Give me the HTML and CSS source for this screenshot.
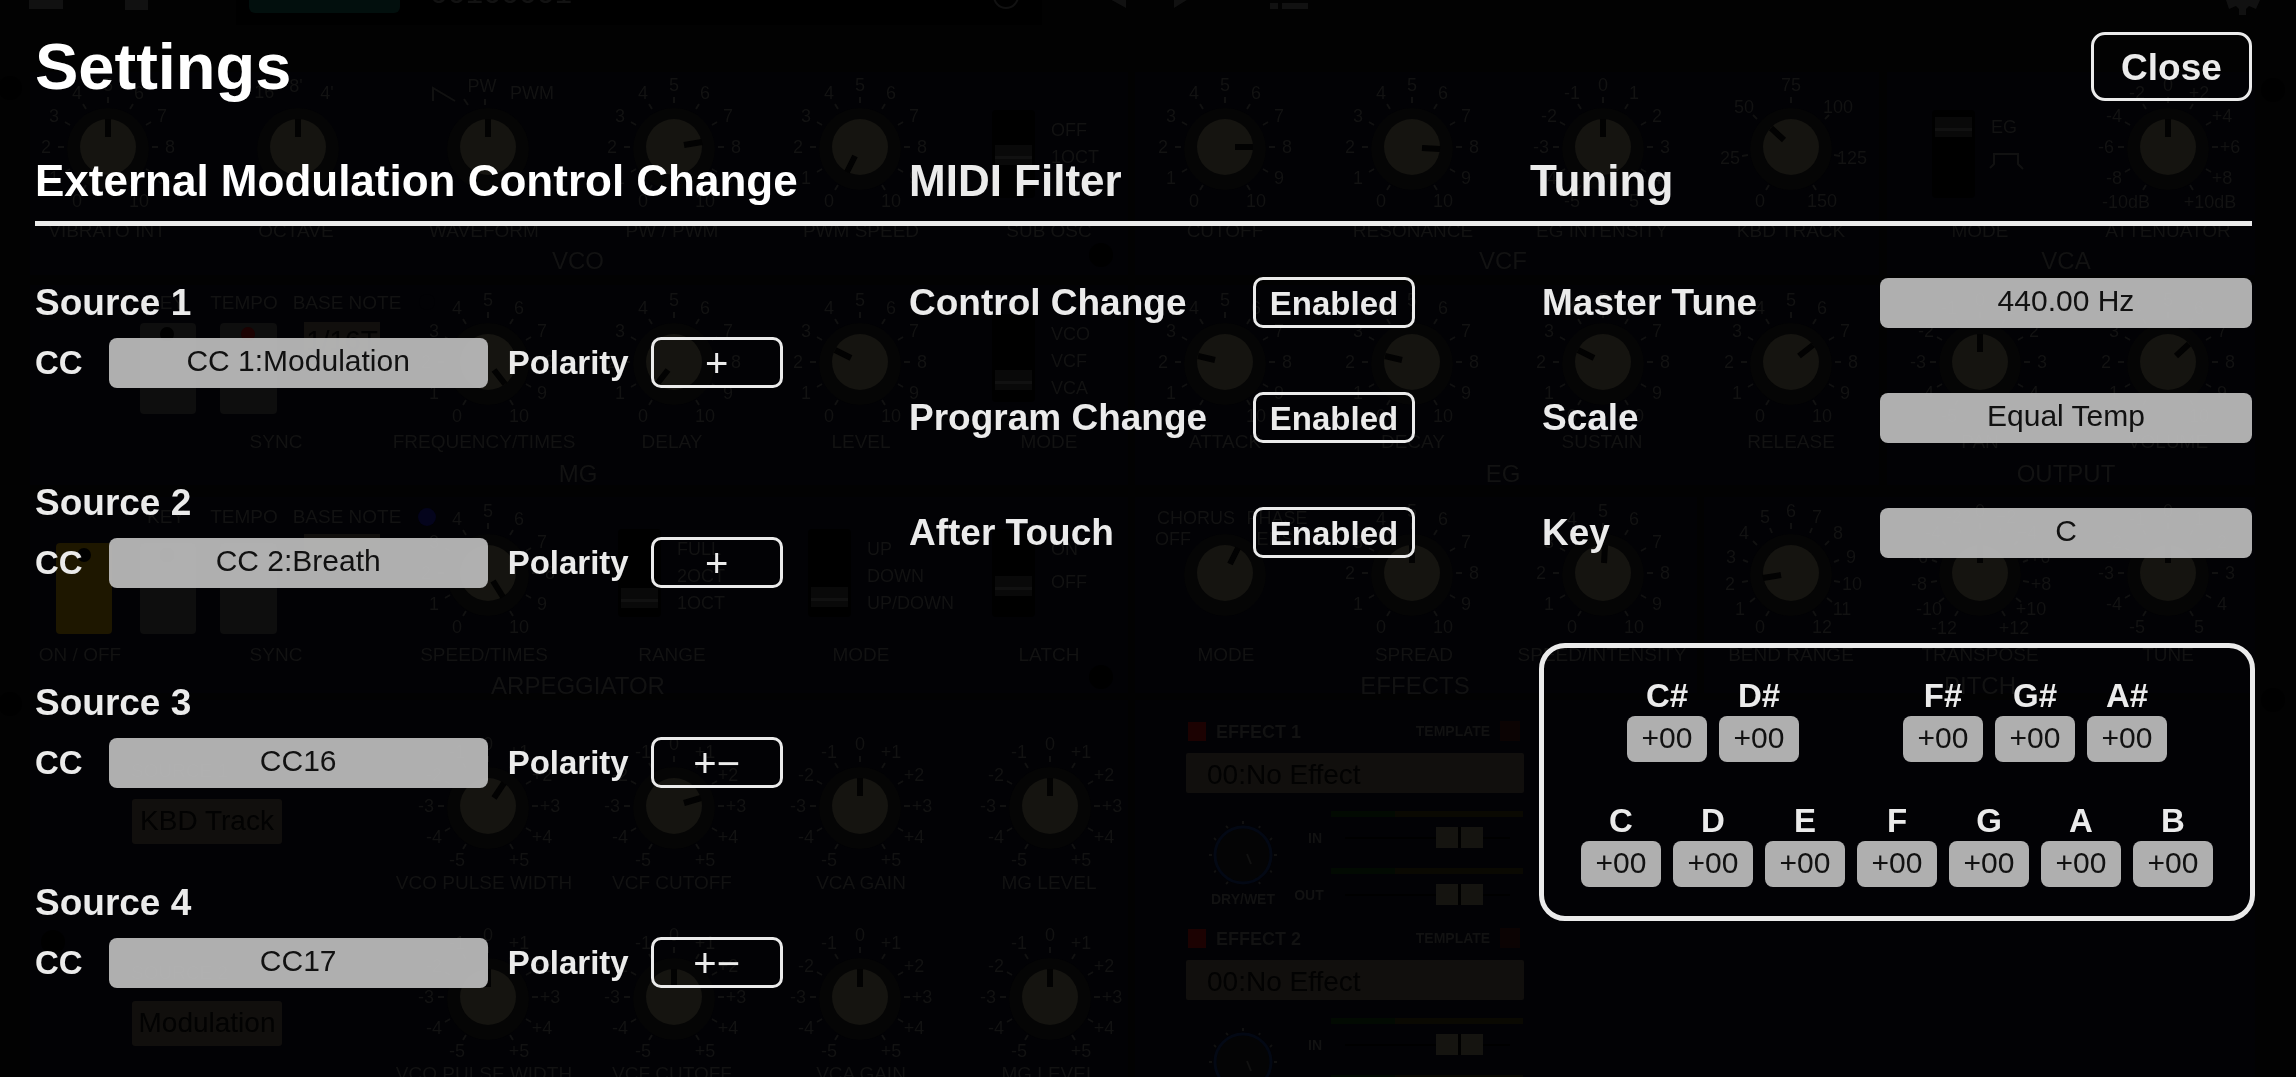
FILE: index.html
```html
<!DOCTYPE html>
<html lang="en">
<head>
  <meta charset="UTF-8" />
  <meta name="viewport" content="width=device-width, initial-scale=1" />
  <title>Settings</title>
  <link rel="stylesheet" href="styles.css">
</head>
<body>

  <!-- Synth panel behind the overlay, filled in by panel.js -->
  <svg id="panel" class="panel" viewBox="0 0 2296 1077" preserveAspectRatio="xMinYMin slice" aria-hidden="true"></svg>

  <div class="settings">
    <header class="settings-header">
      <h1>Settings</h1>
      <button class="btn btn-close" type="button">Close</button>
    </header>

    <div class="columns headings">
      <h2>External Modulation Control Change</h2>
      <h2>MIDI Filter</h2>
      <h2>Tuning</h2>
    </div>

    <div class="columns">
      <!-- External modulation -->
      <section class="sources">
        <div class="source">
          <h3>Source 1</h3>
          <div class="source-row">
            <label for="cc1">CC</label>
            <select id="cc1" class="field"><option>CC 1:Modulation</option></select>
            <label for="pol1">Polarity</label>
            <button id="pol1" class="btn btn-polarity" type="button">+</button>
          </div>
        </div>
        <div class="source">
          <h3>Source 2</h3>
          <div class="source-row">
            <label for="cc2">CC</label>
            <select id="cc2" class="field"><option>CC 2:Breath</option></select>
            <label for="pol2">Polarity</label>
            <button id="pol2" class="btn btn-polarity" type="button">+</button>
          </div>
        </div>
        <div class="source">
          <h3>Source 3</h3>
          <div class="source-row">
            <label for="cc3">CC</label>
            <select id="cc3" class="field"><option>CC16</option></select>
            <label for="pol3">Polarity</label>
            <button id="pol3" class="btn btn-polarity" type="button">+−</button>
          </div>
        </div>
        <div class="source">
          <h3>Source 4</h3>
          <div class="source-row">
            <label for="cc4">CC</label>
            <select id="cc4" class="field"><option>CC17</option></select>
            <label for="pol4">Polarity</label>
            <button id="pol4" class="btn btn-polarity" type="button">+−</button>
          </div>
        </div>
      </section>

      <!-- MIDI filter -->
      <section class="filters">
        <div class="row">
          <label for="filterCc">Control Change</label>
          <button id="filterCc" class="btn btn-toggle" type="button">Enabled</button>
        </div>
        <div class="row">
          <label for="filterPc">Program Change</label>
          <button id="filterPc" class="btn btn-toggle" type="button">Enabled</button>
        </div>
        <div class="row">
          <label for="filterAt">After Touch</label>
          <button id="filterAt" class="btn btn-toggle" type="button">Enabled</button>
        </div>
      </section>

      <!-- Tuning -->
      <section class="tuning">
        <div class="row">
          <label for="masterTune">Master Tune</label>
          <input id="masterTune" class="field" type="text" value="440.00 Hz">
        </div>
        <div class="row">
          <label for="scale">Scale</label>
          <select id="scale" class="field"><option>Equal Temp</option></select>
        </div>
        <div class="row">
          <label for="key">Key</label>
          <select id="key" class="field"><option>C</option></select>
        </div>

        <div class="notes">
          <label class="note note-first">C#<input class="field" type="text" value="+00"></label>
          <label class="note">D#<input class="field" type="text" value="+00"></label>
          <label class="note note-skip">F#<input class="field" type="text" value="+00"></label>
          <label class="note">G#<input class="field" type="text" value="+00"></label>
          <label class="note">A#<input class="field" type="text" value="+00"></label>
          <label class="note note-white">C<input class="field" type="text" value="+00"></label>
          <label class="note">D<input class="field" type="text" value="+00"></label>
          <label class="note">E<input class="field" type="text" value="+00"></label>
          <label class="note">F<input class="field" type="text" value="+00"></label>
          <label class="note">G<input class="field" type="text" value="+00"></label>
          <label class="note">A<input class="field" type="text" value="+00"></label>
          <label class="note">B<input class="field" type="text" value="+00"></label>
        </div>
      </section>
    </div>
  </div>

  <script src="panel.js"></script>
</body>
</html>
```
FILE: styles.css
```css
* {
  margin: 0;
  padding: 0;
  box-sizing: border-box;
}

body {
  font-family: "Liberation Sans", Arial, sans-serif;
  background-color: #020202;
  color: #ebebeb;
  min-height: 100vh;
}

/* Dimmed synth panel */
.panel {
  position: fixed;
  top: 0;
  left: 0;
  width: 100%;
  height: 100%;
  z-index: -1;
}

.panel text {
  fill: #121212;
  font-size: 19px;
  text-anchor: middle;
}

.panel .scale-label {
  font-size: 18px;
}

.panel .section {
  font-size: 24px;
}

.panel .left {
  text-anchor: start;
}

.panel .bold {
  font-weight: bold;
}

.panel .small {
  font-size: 14px;
  font-weight: bold;
}

.panel .display {
  font-size: 28px;
  fill: #020202;
}

.panel .patch-name {
  font-size: 32px;
}

.panel .bay {
  fill: #020205;
}

.panel .ring {
  fill: #050505;
}

.panel .cap {
  fill: #151410;
}

.panel .lcd {
  fill: #110f0d;
}

.panel .slot {
  fill: #000;
}

.panel .grip {
  fill: #090909;
}

.panel .key {
  fill: #0e0e0e;
}

.panel .key-on {
  fill: #1e1700;
}

.panel .tick {
  stroke: #111;
  stroke-width: 2;
  fill: none;
}

.panel .pointer {
  stroke: #020202;
  stroke-width: 6;
}

.panel .led-red {
  fill: #1c0202;
}

.panel .led-off {
  fill: #0b0303;
}

.panel .led-blue {
  fill: #04041c;
}

.panel .preset {
  fill: #020f0d;
}

.panel .icon {
  fill: #111;
}

.panel .blue-ring {
  fill: #040405;
  stroke: #030814;
  stroke-width: 3;
}

.panel .meter-green {
  fill: #020a02;
}

.panel .meter-yellow {
  fill: #0a0902;
}

/* Settings overlay */
.settings {
  padding: 32px 44px 40px 35px;
}

.settings-header {
  display: flex;
  justify-content: space-between;
  align-items: center;
  height: 69px;
}

h1 {
  font-size: 65px;
  line-height: 72px;
  color: #fff;
}

h2 {
  font-size: 44px;
  line-height: 48px;
}

.headings h2:first-child {
  color: #fff;
}

h3 {
  font-size: 37px;
  line-height: 42px;
}

.columns {
  display: grid;
  grid-template-columns: 874fr 621fr 722fr;
}

.headings {
  padding: 56px 0 16px;
  border-bottom: 5px solid #ebebeb;
  margin-bottom: 51px;
}

/* Buttons and fields */
.btn {
  background: transparent;
  border: 3px solid #ebebeb;
  border-radius: 10px;
  color: #ebebeb;
  font-family: inherit;
  font-size: 33px;
  font-weight: bold;
  cursor: pointer;
}

.btn-close {
  width: 161px;
  height: 69px;
  padding-top: 3px;
  font-size: 37px;
  border-radius: 14px;
}

.btn-toggle {
  width: 162px;
  height: 51px;
  padding-top: 2px;
}

.btn-polarity {
  width: 132px;
  height: 51px;
  margin-left: 22px;
  font-size: 40px;
  font-weight: normal;
  line-height: 40px;
}

.field {
  appearance: none;
  height: 50px;
  border: none;
  border-radius: 8px;
  background-color: rgba(188, 188, 188, 0.93);
  color: #111;
  font-family: inherit;
  font-size: 30px;
  text-align: center;
  text-align-last: center;
  padding-bottom: 4px;
}

/* External modulation sources */
.sources {
  display: flex;
  flex-direction: column;
  gap: 94px;
  padding-top: 5px;
}

.source-row {
  display: flex;
  align-items: center;
  margin-top: 13px;
  font-size: 33px;
  font-weight: bold;
}

.source-row .field {
  width: 379px;
  margin: 0 20px 0 26px;
}

/* Label and control on one line */
.row {
  display: flex;
  align-items: center;
  height: 51px;
  margin-bottom: 64px;
  font-size: 37px;
  font-weight: bold;
}

.filters .row label {
  width: 344px;
}

.tuning {
  padding-left: 9px;
  margin-right: -3px;
}

.tuning .row {
  justify-content: space-between;
  padding: 0 3px;
}

.tuning .row .field {
  width: 372px;
}

/* Note offsets, laid out like a keyboard */
.notes {
  display: grid;
  grid-template-columns: repeat(14, 1fr);
  gap: 41px 12px;
  margin-top: 85px;
  padding: 30px 37px 29px;
  border: 5px solid #ebebeb;
  border-radius: 26px;
}

.note {
  grid-column: span 2;
  font-size: 33px;
  font-weight: bold;
  line-height: 36px;
  text-align: center;
}

.note-first {
  grid-column: 2 / span 2;
}

.note-skip {
  grid-column: 8 / span 2;
}

.note-white {
  grid-column: 1 / span 2;
}

.note .field {
  display: block;
  width: 100%;
  height: 46px;
  margin-top: 2px;
  padding-bottom: 2px;
}
```
FILE: panel.js
```js
const panel = document.getElementById('panel');
let out = '';

function text(x, y, label, cls) {
  out += `<text x="${x}" y="${y}" class="${cls || ''}">${label}</text>`;
}

function rect(x, y, w, h, cls, r) {
  out += `<rect x="${x}" y="${y}" width="${w}" height="${h}" rx="${r || 0}" class="${cls}"/>`;
}

// angle is clockwise from 12 o'clock
function point(x, y, r, angle) {
  const a = angle * Math.PI / 180;
  return [Math.round(x + r * Math.sin(a)), Math.round(y - r * Math.cos(a))];
}

function line(from, to, cls) {
  out += `<line x1="${from[0]}" y1="${from[1]}" x2="${to[0]}" y2="${to[1]}" class="${cls}"/>`;
}

// Knob with its scale spread from -150 to 150 degrees
function knob(x, y, angle, labels) {
  const step = labels.length > 1 ? 300 / (labels.length - 1) : 0;
  labels.forEach((label, i) => {
    const a = -150 + step * i;
    line(point(x, y, 44, a), point(x, y, 50, a), 'tick');
    const p = point(x, y, 62, a);
    text(p[0], p[1] + 6, label, 'scale-label');
  });
  out += `<circle cx="${x}" cy="${y + 2}" r="41" class="ring"/>`;
  out += `<circle cx="${x}" cy="${y}" r="28" class="cap"/>`;
  line(point(x, y, 10, angle), point(x, y, 28, angle), 'pointer');
}

// Vertical switch with its option names on the right
function fader(x, y, grip, labels) {
  rect(x, y, 43, 88, 'slot', 4);
  rect(x + 3, grip, 37, 20, 'grip');
  rect(x + 3, grip + 11, 37, 3, 'icon');
  labels.forEach((label, i) => text(x + 59, y + 26 + i * 27, label, 'left scale-label'));
}

function names(y, list) {
  list.forEach(([x, label]) => text(x, y, label));
}

const ten = ['0', '1', '2', '3', '4', '5', '6', '7', '8', '9', '10'];
const five = ['-5', '-4', '-3', '-2', '-1', '0', '1', '2', '3', '4', '5'];
const plus = ['-5', '-4', '-3', '-2', '-1', '0', '+1', '+2', '+3', '+4', '+5'];

// Toolbar
rect(29, 0, 34, 9, 'icon');
rect(125, 0, 23, 10, 'icon');
rect(236, 0, 806, 25, 'slot');
rect(249, -20, 151, 33, 'preset', 6);
text(430, 3, '00100001', 'left patch-name');
out += '<circle cx="1006" cy="-4" r="12" class="tick"/>';
out += '<path d="M1108 -2 L1126 8 V-12Z M1190 -2 L1174 8 V-12Z" class="icon"/>';
rect(1270, 3, 8, 6, 'icon');
rect(1282, 3, 26, 6, 'icon');
out += '<path d="M2226 0 h34 l-4 9 -7 -3 -3 3 v6 h-7 v-6 l-3 -3 -7 3z" class="icon"/>';

// Panel bays
[[72, 203], [285, 200], [497, 196], [700, 377]].forEach(([y, h]) => {
  rect(30, y, 1098, h, 'bay');
});
[[72, 203], [285, 200]].forEach(([y, h]) => {
  rect(1135, y, 744, h, 'bay');
  rect(1887, y, 368, h, 'bay');
});
rect(1135, 497, 562, 196, 'bay');
rect(1704, 497, 551, 196, 'bay');
rect(1135, 700, 1120, 377, 'bay');

// Screws
[[10, 88], [1101, 255], [1101, 677], [2273, 90], [10, 704], [2273, 700], [53, 942]].forEach(([x, y]) => {
  out += `<circle cx="${x}" cy="${y}" r="12" class="slot"/>`;
});

// VCO, VCF, VCA
knob(108, 147, 0, ten);
knob(298, 147, 0, []);
text(266, 98, "16'", 'scale-label');
text(296, 92, "8'", 'scale-label');
text(327, 99, "4'", 'scale-label');
knob(488, 147, 0, []);
out += '<path d="M433 101 V88 L455 101" class="tick"/>';
line([468, 105], [464, 99], 'tick');
line([485, 105], [485, 99], 'tick');
text(482, 92, 'PW', 'scale-label');
text(532, 99, 'PWM', 'scale-label');
knob(674, 147, 80, ten);
knob(860, 147, 208, ten);
fader(992, 110, 145, ['OFF', '1OCT']);
knob(1225, 147, 90, ten);
knob(1412, 147, 95, ten);
knob(1603, 147, 0, five);
knob(1791, 147, -46, ['0', '25', '50', '75', '100', '125', '150']);
fader(1932, 110, 117, []);
text(1991, 133, 'EG', 'left scale-label');
out += '<path d="M1990 168 l4 -4 V154 H2018 V164 l5 5" class="tick"/>';
knob(2168, 147, 0, ['', '-8', '-6', '-4', '-2', '0', '+2', '+4', '+6', '+8', '']);
text(2126, 208, '-10dB', 'scale-label');
text(2210, 208, '+10dB', 'scale-label');
names(237, [[107, 'VIBRATO INT'], [296, 'OCTAVE'], [484, 'WAVEFORM'], [672, 'PW / PWM'], [861, 'PWM SPEED'],
  [1049, 'SUB OSC'], [1225, 'CUTOFF'], [1413, 'RESONANCE'], [1602, 'EG INTENSITY'], [1791, 'KBD TRACK'],
  [1980, 'MODE'], [2168, 'ATTENUATOR']]);
text(578, 269, 'VCO', 'section');
text(1503, 269, 'VCF', 'section');
text(2066, 269, 'VCA', 'section');

// MG, EG, OUTPUT
names(309, [[166, 'KEY'], [244, 'TEMPO'], [347, 'BASE NOTE']]);
rect(140, 323, 56, 91, 'key', 4);
rect(220, 323, 57, 91, 'key', 4);
out += '<circle cx="167" cy="334" r="7" class="slot"/>';
out += '<circle cx="248" cy="334" r="7" class="led-red"/>';
rect(304, 322, 76, 34, 'lcd');
text(342, 350, '1/16T', 'display');
out += '<circle cx="427" cy="302" r="8" class="bay"/>';
knob(488, 362, 142, ten);
knob(674, 362, 217, ten);
knob(860, 362, -64, ten);
fader(992, 314, 370, ['VCO', 'VCF', 'VCA']);
knob(1225, 362, -77, ten);
knob(1412, 362, -78, ten);
knob(1603, 362, -65, ten);
knob(1791, 362, 52, ten);
knob(1980, 362, 0, five);
knob(2168, 362, 50, ten);
names(448, [[276, 'SYNC'], [484, 'FREQUENCY/TIMES'], [672, 'DELAY'], [861, 'LEVEL'], [1049, 'MODE'],
  [1225, 'ATTACK'], [1413, 'DECAY'], [1602, 'SUSTAIN'], [1791, 'RELEASE'], [1980, 'PAN'], [2168, 'VOLUME']]);
text(578, 482, 'MG', 'section');
text(1503, 482, 'EG', 'section');
text(2066, 482, 'OUTPUT', 'section');

// ARPEGGIATOR, EFFECTS, PITCH
names(523, [[166, 'KEY'], [244, 'TEMPO'], [347, 'BASE NOTE']]);
rect(56, 543, 56, 91, 'key-on', 4);
rect(140, 543, 56, 91, 'key', 4);
rect(220, 543, 57, 91, 'key', 4);
out += '<circle cx="84" cy="555" r="7" class="slot"/>';
out += '<circle cx="167" cy="555" r="7" class="slot"/>';
rect(304, 534, 76, 34, 'lcd');
out += '<circle cx="427" cy="517" r="9" class="led-blue"/>';
knob(488, 573, 148, ten);
fader(618, 529, 588, ['FULL', '2OCT', '1OCT']);
fader(808, 529, 587, ['UP', 'DOWN', 'UP/DOWN']);
fader(992, 529, 576, ['ON']);
text(1051, 588, 'OFF', 'left scale-label');
knob(1225, 573, 28, []);
text(1196, 524, 'CHORUS', 'scale-label');
text(1277, 524, 'PHASE', 'scale-label');
text(1173, 545, 'OFF', 'scale-label');
text(1275, 545, 'ENS', 'scale-label');
knob(1412, 573, 0, ten);
knob(1603, 573, 5, ten);
knob(1791, 573, -100, ['0', '1', '2', '3', '4', '5', '6', '7', '8', '9', '10', '11', '12']);
knob(1980, 573, 0, ['', '-10', '-8', '-6', '-4', '-2', '0', '+2', '+4', '+6', '+8', '+10', '']);
text(1944, 634, '-12', 'scale-label');
text(2014, 634, '+12', 'scale-label');
knob(2168, 573, 0, five);
names(661, [[80, 'ON / OFF'], [276, 'SYNC'], [484, 'SPEED/TIMES'], [672, 'RANGE'], [861, 'MODE'], [1049, 'LATCH'],
  [1226, 'MODE'], [1414, 'SPREAD'], [1602, 'SPEED/INTENSITY'], [1791, 'BEND RANGE'], [1980, 'TRANSPOSE'], [2168, 'TUNE']]);
text(578, 694, 'ARPEGGIATOR', 'section');
text(1415, 694, 'EFFECTS', 'section');
text(1980, 694, 'PITCH', 'section');

// Modulation routing
[[806, 36, 73, 'KBD Track', 799], [997, 0, 0, 'Modulation', 1001]].forEach(([y, a, b, source, box], i) => {
  knob(488, y, a, plus);
  knob(674, y, b, plus);
  knob(860, y, 0, plus);
  knob(1050, y, 0, plus);
  names(y + 83, [[484, 'VCO PULSE WIDTH'], [672, 'VCF CUTOFF'], [861, 'VCA GAIN'], [1049, 'MG LEVEL']]);
  text(131, box - 22, 'SOURCE ' + (i + 1), 'left');
  rect(132, box, 150, 45, 'lcd', 3);
  text(207, box + 31, source, 'display');
});

// Effect slots
[0, 207].forEach((dy, i) => {
  rect(1188, 722 + dy, 18, 19, 'led-red');
  text(1216, 738 + dy, 'EFFECT ' + (i + 1), 'left bold scale-label');
  text(1453, 736 + dy, 'TEMPLATE', 'small');
  rect(1500, 721 + dy, 20, 20, 'led-off');
  rect(1186, 753 + dy, 338, 40, 'lcd', 2);
  text(1207, 784 + dy, '00:No Effect', 'left display');
  out += `<circle cx="1243" cy="${855 + dy}" r="28" class="blue-ring"/>`;
  for (let a = -150; a <= 150; a += 30) {
    line(point(1243, 855 + dy, 31, a), point(1243, 855 + dy, 34, a), 'tick');
  }
  line([1247, 854 + dy], [1251, 864 + dy], 'tick');
  text(1243, 904 + dy, 'DRY/WET', 'small');
  [0, 57].forEach((y, n) => {
    text(n ? 1309 : 1315, 843 + dy + y, n ? 'OUT' : 'IN', 'small');
    rect(1331, 811 + dy + y, 64, 6, 'meter-green');
    rect(1395, 811 + dy + y, 128, 6, 'meter-yellow');
    rect(1345, 837 + dy + y, 165, 2, 'slot');
    rect(1436, 827 + dy + y, 47, 21, 'cap');
    rect(1458, 827 + dy + y, 3, 21, 'slot');
  });
});

panel.innerHTML = out;
```
